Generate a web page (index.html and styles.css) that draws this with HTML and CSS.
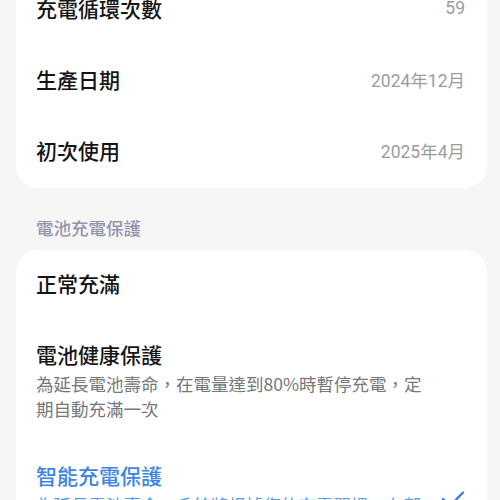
FILE: index.html
```html
<!DOCTYPE html>
<html lang="zh-Hant">
<head>
<meta charset="utf-8">
<link rel="stylesheet" href="styles.css">
</head>
<body>
<div class="page">
  <div class="card card-info">
    <div class="row">
      <span class="title">充電循環次數</span>
      <span class="value">59</span>
    </div>
    <div class="row">
      <span class="title">生產日期</span>
      <span class="value">2024年12月</span>
    </div>
    <div class="row">
      <span class="title">初次使用</span>
      <span class="value">2025年4月</span>
    </div>
  </div>

  <div class="section-header">電池充電保護</div>

  <div class="card">
    <div class="option">
      <div class="text">
        <div class="title">正常充滿</div>
      </div>
    </div>
    <div class="option">
      <div class="text">
        <div class="title">電池健康保護</div>
        <div class="desc">為延長電池壽命，在電量達到80%時暫停充電，定期自動充滿一次</div>
      </div>
    </div>
    <div class="option selected">
      <div class="text">
        <div class="title">智能充電保護</div>
        <div class="desc">為延長電池壽命，系統將根據您的充電習慣，在部分時段暫停充電，並在您使用前充滿</div>
      </div>
      <svg class="check" width="24" height="20" viewBox="0 0 24 20" aria-hidden="true">
        <path d="M2 9 L9 16 L22 2.5" fill="none" stroke="#3b7fdc" stroke-width="2.4" stroke-linecap="round" stroke-linejoin="round"/>
      </svg>
    </div>
  </div>
</div>
</body>
</html>
```

FILE: styles.css
```css
html, body {
  margin: 0;
  padding: 0;
  background: #f6f6f6;
}
body {
  font-family: "Noto Sans CJK TC", "Noto Sans", Roboto, sans-serif;
  overflow: hidden;
  height: 500px;
}
.page {
  margin: -25px 13px 0 16px;
}
.card {
  background: #ffffff;
  border-radius: 22px;
  overflow: hidden;
}
.row {
  height: 71px;
  box-sizing: border-box;
  padding: 0 22px 5px 20px;
  display: flex;
  align-items: center;
  justify-content: space-between;
}
.title {
  font-size: 21px;
  font-weight: 500;
  color: #151515;
  line-height: 34px;
}
.value {
  font-size: 17.5px;
  color: #9c9c9c;
  font-family: Roboto, "Noto Sans CJK TC", sans-serif;
}
.section-header {
  padding: 28px 0 10px 20px;
  font-size: 17.5px;
  line-height: 24px;
  font-weight: 500;
  color: #9293ad;
}
.option {
  display: flex;
  align-items: center;
  justify-content: space-between;
  padding: 16px 22px 20px 20px;
}
.option + .option {
  padding-top: 17px;
}
.text {
  max-width: 400px;
}
.desc {
  margin-top: 0;
  font-size: 17.5px;
  line-height: 25px;
  color: #777777;
}
.selected .title {
  color: #3a85e6;
}
.selected .desc {
  color: #5c9be8;
}
.check {
  flex: none;
  align-self: flex-start;
  margin-left: 6px;
  margin-top: 32px;
}
```
